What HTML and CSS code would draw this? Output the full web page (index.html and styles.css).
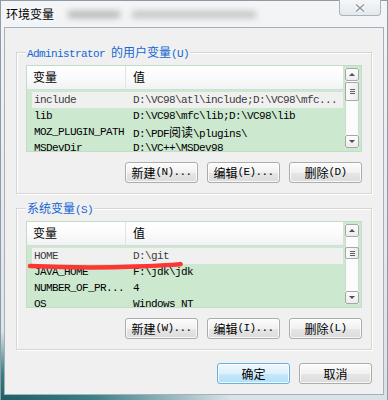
FILE: index.html
```html
<html>
<head>
	<meta http-equiv="content-type" content="text/html;charset=utf-8">
	<title>环境变量</title>
	<link rel="stylesheet" href="styles.css">
</head>
<body>
	<div class="window">
		<div class="titlebar">
			<span class="title">环境变量</span>
			<span class="smear w1"></span>
			<span class="smear w2"></span>
			<span class="closebtn">
				<svg width="10" height="8" viewBox="0 0 10 8"><path d="M1 0.5 L9 7.5 M9 0.5 L1 7.5" stroke="#fff" stroke-width="3"/><path d="M1 0.5 L9 7.5 M9 0.5 L1 7.5" stroke="#8c949c" stroke-width="1.4"/></svg>
			</span>
		</div>

		<div class="client">

			<div class="group">
				<div class="legend">Administrator <span class="zh">的用户变量</span>(U)</div>
				<div class="list">
					<div class="list-main">
						<div class="list-head">
							<span class="hcol1">变量</span>
							<span class="hcol2">值</span>
						</div>
						<div class="rows">
							<div class="row sel"><span class="c1">include</span><span class="c2">D:\VC98\atl\include;D:\VC98\mfc...</span></div>
							<div class="row"><span class="c1">lib</span><span class="c2">D:\VC98\mfc\lib;D:\VC98\lib</span></div>
							<div class="row"><span class="c1">MOZ_PLUGIN_PATH</span><span class="c2">D:\PDF<span class="zh">阅读</span>\plugins\</span></div>
							<div class="row"><span class="c1">MSDevDir</span><span class="c2">D:\VC++\MSDev98</span></div>
						</div>
					</div>
					<div class="vscroll">
						<div class="sb-btn up"></div>
						<div class="sb-track"><div class="sb-thumb" style="margin-top:1px;height:19px"></div></div>
						<div class="sb-btn down"></div>
					</div>
				</div>
				<div class="btnrow">
					<div class="btn"><span class="zh">新建</span>(N)...</div>
					<div class="btn"><span class="zh">编辑</span>(E)...</div>
					<div class="btn"><span class="zh">删除</span>(D)</div>
				</div>
			</div>

			<div class="group second">
				<div class="legend"><span class="zh">系统变量</span>(S)</div>
				<div class="list">
					<div class="list-main">
						<div class="list-head">
							<span class="hcol1">变量</span>
							<span class="hcol2">值</span>
						</div>
						<div class="rows">
							<div class="row sel"><span class="c1">HOME</span><span class="c2">D:\git</span></div>
							<div class="row"><span class="c1">JAVA_HOME</span><span class="c2">F:\jdk\jdk</span></div>
							<div class="row"><span class="c1">NUMBER_OF_PR...</span><span class="c2">4</span></div>
							<div class="row"><span class="c1">OS</span><span class="c2">Windows_NT</span></div>
						</div>
					</div>
					<div class="vscroll">
						<div class="sb-btn up"></div>
						<div class="sb-track"><div class="sb-thumb" style="margin-top:10px;height:12px"></div></div>
						<div class="sb-btn down"></div>
					</div>
					<svg class="scribble" width="170" height="14" viewBox="0 0 170 14"><path d="M4 7 Q60 9.5 110 7.5 T154 5" fill="none" stroke="#ff3434" stroke-width="4.5" stroke-linecap="round"/></svg>
				</div>
				<div class="btnrow">
					<div class="btn"><span class="zh">新建</span>(W)...</div>
					<div class="btn"><span class="zh">编辑</span>(I)...</div>
					<div class="btn"><span class="zh">删除</span>(L)</div>
				</div>
			</div>

			<div class="dlgbtns">
				<div class="btn default"><span class="zh">确定</span></div>
				<div class="btn"><span class="zh">取消</span></div>
			</div>

		</div>
	</div>
</body>
</html>
```

FILE: styles.css
```css
*{
	box-sizing:border-box;
}
body{
	margin:0;
	padding:0;
	background:#fff;
	font-family:"Liberation Mono","Noto Sans CJK SC",monospace;
	font-size:11px;
	letter-spacing:-0.6px;
	color:#000;
}
.zh{
	font-family:"Noto Sans CJK SC",sans-serif;
	font-size:12px;
	letter-spacing:0;
}

/* window frame */
.window{
	width:388px;
	height:400px;
	display:flex;
	flex-direction:column;
	padding:0 3px 5px 3px;
	border:1px solid #8e9ba7;
	border-bottom:none;
	background:
		radial-gradient(ellipse 230px 70px at 0 400px, #1c5d64 0, #3b8088 40%, rgba(225,232,236,0) 100%),
		linear-gradient(#f3f5f7, #e3e9ee 60%, #d9e2e7);
}
.titlebar{
	height:26px;
	display:flex;
	align-items:flex-start;
	position:relative;
}
.title{
	font-family:"Noto Sans CJK SC",sans-serif;
	font-size:12px;
	letter-spacing:0;
	line-height:14px;
	margin:6px 0 0 2px;
	text-shadow:0 0 6px #fff;
}
.smear{
	height:7px;
	margin-top:10px;
	background:#9a9a9a;
	filter:blur(3px);
	opacity:0.7;
}
.smear.w1{
	width:52px;
	margin-left:14px;
}
.smear.w2{
	width:124px;
	margin-left:12px;
	opacity:0.55;
}
.closebtn{
	position:absolute;
	right:3px;
	top:-1px;
	width:42px;
	height:16px;
	border:1px solid #a9b3bc;
	border-top:none;
	border-radius:0 0 4px 4px;
	background:linear-gradient(#f5f7f9,#e5e9ed);
	display:flex;
	align-items:center;
	justify-content:center;
}

.client{
	flex:1;
	display:flex;
	flex-direction:column;
	background:#f0f0f0;
	border:1px solid #a5b0ba;
}

/* group boxes */
.group{
	margin:24px 11px 0;
	border:1px solid #d5d5d5;
	box-shadow:inset 1px 1px 0 #fff, 1px 1px 0 #fff;
	padding:0 9px 10px;
}
.group.second{
	margin-top:14px;
}
.legend{
	width:fit-content;
	margin:-8px 0 0 0;
	padding:0 1px;
	line-height:14px;
	height:14px;
	background:#f0f0f0;
	color:#1466d2;
}
.legend .zh{
	font-size:12px;
}

/* list views */
.list{
	margin-top:6px;
	height:87px;
	display:flex;
	border:1px solid #c3dcc5;
	background:#cce8cf;
	position:relative;
	overflow:hidden;
}
.list-main{
	flex:1;
	display:flex;
	flex-direction:column;
	overflow:hidden;
}
.list-head{
	height:24px;
	flex:none;
	display:flex;
	background:linear-gradient(#ffffff,#fbfbfb 50%,#f1f2f3);
	border-bottom:1px solid #d8dadc;
	font-family:"Noto Sans CJK SC",sans-serif;
	font-size:12px;
	letter-spacing:0;
	line-height:22px;
}
.hcol1{
	width:99px;
	padding-left:6px;
	border-right:1px solid #e1e3e6;
}
.hcol2{
	flex:1;
	padding-left:7px;
}
.rows{
	padding:2px 0 0 5px;
}
.row{
	height:16px;
	line-height:16px;
	display:flex;
	white-space:nowrap;
}
.row.sel{
	background:#f0f0f0;
	color:#3c3c3c;
}
.c1{
	width:99px;
	padding-left:2px;
	flex:none;
}
.c2{
	padding-left:2px;
}

/* scrollbar */
.vscroll{
	width:14px;
	flex:none;
	margin:2px 2px 3px 2px;
	display:flex;
	flex-direction:column;
	background:#fff;
}
.sb-btn{
	height:13px;
	flex:none;
	border:1px solid #a7a7a7;
	border-radius:2px;
	background:linear-gradient(#fdfdfd,#ececec);
	display:flex;
	align-items:center;
	justify-content:center;
}
.sb-btn::after{
	content:"";
	width:0;
	height:0;
	border-left:3px solid transparent;
	border-right:3px solid transparent;
}
.sb-btn.up::after{
	border-bottom:3px solid #4d5058;
}
.sb-btn.down::after{
	border-top:3px solid #4d5058;
}
.sb-track{
	flex:1;
	border-left:1px solid #d6d6d6;
	border-right:1px solid #d6d6d6;
	background:#fcfcfc;
}
.sb-thumb{
	margin-left:-1px;
	margin-right:-1px;
	border:1px solid #a7a7a7;
	border-radius:2px;
	background:linear-gradient(90deg,#fbfbfb,#ececec);
	display:flex;
	align-items:center;
	justify-content:center;
}
.sb-thumb::after{
	content:"";
	width:5px;
	height:5px;
	background:repeating-linear-gradient(#5c5f66 0,#5c5f66 1px,transparent 1px,transparent 2px);
}

/* red marker drawn over the list */
.scribble{
	position:absolute;
	left:-1px;
	top:37px;
}

/* buttons */
.btnrow{
	display:flex;
	justify-content:flex-end;
	gap:9px;
	margin-top:10px;
}
.btn{
	width:73px;
	height:21px;
	border:1px solid #acacac;
	border-radius:3px;
	background:linear-gradient(#fcfcfc,#f1f1f1 50%,#e6e6e6 51%,#dcdcdc);
	box-shadow:inset 0 0 0 1px rgba(255,255,255,0.8);
	display:flex;
	align-items:center;
	justify-content:center;
	line-height:19px;
}
.btn.default{
	border-color:#68b1d8;
	background:linear-gradient(#eef8fe,#dcf1fc 50%,#c7e8fa 51%,#b4def5);
}
.dlgbtns{
	margin-top:auto;
	display:flex;
	justify-content:flex-end;
	gap:9px;
	padding:0 11px 10px 0;
}
```
